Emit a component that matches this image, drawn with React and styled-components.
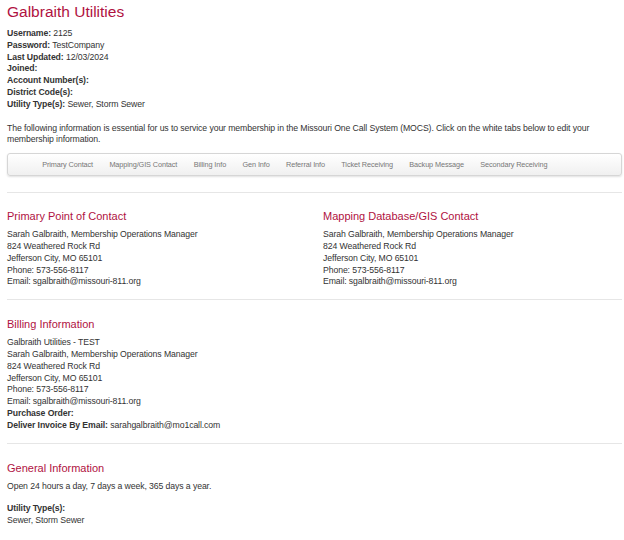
import React from "react";
import styled, { createGlobalStyle } from "styled-components";

const G = createGlobalStyle`
  body { margin: 0; font-family: "Liberation Sans", Arial, sans-serif; color: #333; background: #fff; }
`;
const Page = styled.div`padding: 3px 2px 0 7px; font-size: 8.7px; line-height: 11.8px; letter-spacing: -0.1px;`;
const Title = styled.h1`margin: 0 0 7px; font-size: 15.5px; line-height: 18px; font-weight: normal; color: #b0123f; letter-spacing: 0;`;
const Line = styled.div``;
const B = styled.b`font-weight: bold;`;
const Para = styled.p`margin: 12px 0 7px; width: 610px;`;
const Nav = styled.div`
  display: flex; padding: 0 0 0 26px; height: 21px; align-items: center;
  border: 1px solid #d6d6d6; border-radius: 3px; box-shadow: 0 1px 2px rgba(0,0,0,.12);
  background: linear-gradient(#fff, #f0f0f0); width: 587px; font-size: 7.3px; color: #777;
`;
const NavItem = styled.span`padding: 0 8.2px;`;
const Hr = styled.hr`border: 0; border-top: 1px solid #e6e6e6; margin: ${p => p.$t}px 0 ${p => p.$b}px; width: 615px;`;
const Cols = styled.div`display: grid; grid-template-columns: 316px 1fr;`;
const H2 = styled.h2`margin: 0 0 6px; font-size: 11px; line-height: 14px; font-weight: normal; color: #b0123f; letter-spacing: 0;`;

const contact = ["Sarah Galbraith, Membership Operations Manager","824 Weathered Rock Rd","Jefferson City, MO 65101","Phone: 573-556-8117","Email: sgalbraith@missouri-811.org"];
const tabs = ["Primary Contact","Mapping/GIS Contact","Billing Info","Gen Info","Referral Info","Ticket Receiving","Backup Message","Secondary Receiving"];

export default function App() {
  return (<Page><G/>
    <Title>Galbraith Utilities</Title>
    <Line><B>Username:</B> 2125</Line>
    <Line><B>Password:</B> TestCompany</Line>
    <Line><B>Last Updated:</B> 12/03/2024</Line>
    <Line><B>Joined:</B></Line>
    <Line><B>Account Number(s):</B></Line>
    <Line><B>District Code(s):</B></Line>
    <Line><B>Utility Type(s):</B> Sewer, Storm Sewer</Line>
    <Para>The following information is essential for us to service your membership in the Missouri One Call System (MOCS). Click on the white tabs below to edit your membership information.</Para>
    <Nav>{tabs.map(t => <NavItem key={t}>{t}</NavItem>)}</Nav>
    <Hr $t={16} $b={16}/>
    <Cols>
      <div><H2>Primary Point of Contact</H2>{contact.map(c => <Line key={c}>{c}</Line>)}</div>
      <div><H2>Mapping Database/GIS Contact</H2>{contact.map(c => <Line key={c}>{c}</Line>)}</div>
    </Cols>
    <Hr $t={11} $b={17}/>
    <H2>Billing Information</H2>
    <Line>Galbraith Utilities - TEST</Line>
    {contact.map(c => <Line key={c}>{c}</Line>)}
    <Line><B>Purchase Order:</B></Line>
    <Line><B>Deliver Invoice By Email:</B> sarahgalbraith@mo1call.com</Line>
    <Hr $t={11} $b={17}/>
    <H2>General Information</H2>
    <Line>Open 24 hours a day, 7 days a week, 365 days a year.</Line>
    <div style={{height: 11}}/>
    <Line><B>Utility Type(s):</B></Line>
    <Line>Sewer, Storm Sewer</Line>
  </Page>);
}
